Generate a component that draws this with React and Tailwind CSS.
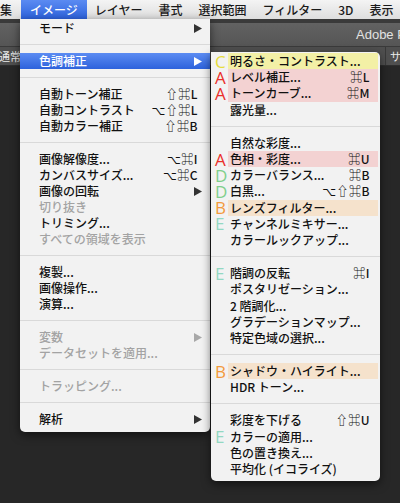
import React from 'react';

const font = { fontFamily: '"Noto Sans CJK JP", "DejaVu Sans", sans-serif' };

const Arrow = ({ color = '#333333' }) => (
  <svg width="8" height="9" viewBox="0 0 8 9" className="shrink-0">
    <path d="M0 0 L8 4.5 L0 9 Z" fill={color} />
  </svg>
);

const Sep = () => (
  <div className="h-[17px] flex items-center">
    <div className="w-full h-px bg-[#d9d9d9]" />
  </div>
);

// left menu row
const Item = ({ label, shortcut, arrow, disabled, active }) => (
  <div
    className={`h-4 flex items-center justify-between pl-[19px] ${arrow ? 'pr-[8px]' : 'pr-[12px]'} text-[12px] leading-none font-medium ${
      active
        ? 'bg-gradient-to-b from-[#5b8bf2] to-[#2d62dc] text-white'
        : disabled
        ? 'text-[#a3a3a3]'
        : 'text-[#111]'
    }`}
  >
    <span>{label}</span>
    {shortcut && <span className="tracking-[0.5px]">{shortcut}</span>}
    {arrow && <Arrow color={active ? '#ffffff' : disabled ? '#a8a8a8' : '#333333'} />}
  </div>
);

const tagColor = {
  C: 'text-[#e6dc3c]',
  A: 'text-[#ea2f2a]',
  D: 'text-[#7fcf8c]',
  B: 'text-[#f39a3c]',
  E: 'text-[#93d8c2]',
};

const hlColor = {
  yellow: 'bg-[#f3f0a6]',
  pink: 'bg-[#f3d2d2]',
  peach: 'bg-[#f5e2cc]',
};

// submenu row
const SubItem = ({ tag, label, shortcut, hl }) => (
  <div className="h-[16.2px] flex items-stretch">
    <div
      className={`w-[17px] pl-[4px] flex items-center text-[17px] leading-none overflow-visible ${tag ? tagColor[tag] : ''}`}
      style={{ fontFamily: '"Open Sans", "Liberation Sans", sans-serif' }}
    >
      {tag}
    </div>
    <div
      className={`flex-1 mr-[2px] pl-[2px] pr-[8px] flex items-center justify-between text-[12px] leading-none font-medium text-[#111] ${hl ? hlColor[hl] : ''}`}
    >
      <span>{label}</span>
      {shortcut && <span className="tracking-[0.5px]">{shortcut}</span>}
    </div>
  </div>
);

const SubSep = () => (
  <div className="h-[17px] flex items-center">
    <div className="w-full h-px bg-[#d9d9d9]" />
  </div>
);

const menuBarItems = ['レイヤー', '書式', '選択範囲', 'フィルター', '3D', '表示'];

export default function App() {
  return (
    <div className="relative w-[400px] h-[503px] overflow-hidden bg-[#272727]" style={font}>
      {/* menu bar */}
      <div className="h-[19px] flex items-center overflow-hidden bg-gradient-to-b from-[#f4f4f4] to-[#dedede] text-[12px] font-medium text-[#1a1a1a] whitespace-nowrap">
        <div className="pr-[9px] h-full flex items-center">集</div>
        <div className="h-full flex items-center px-[9px] bg-gradient-to-b from-[#5b8bf2] to-[#2d62dc] text-white">イメージ</div>
        {menuBarItems.map((m) => (
          <div key={m} className="h-full flex items-center px-[8px]">{m}</div>
        ))}
      </div>

      {/* app chrome behind */}
      <div className="h-[4px] bg-[#3a3a3a]" />
      <div className="h-[24px] overflow-hidden bg-gradient-to-b from-[#626262] to-[#555555] flex items-center pl-[356px] border-b border-[#3a3a3a]">
        <span className="text-[13px] text-[#e2e2e2] whitespace-nowrap" style={{ fontFamily: '"Liberation Sans", sans-serif' }}>
          Adobe Photoshop
        </span>
      </div>
      <div className="h-[19px] bg-[#4f4f4f] flex items-center justify-between text-[11px] text-[#eaeaea] border-b border-[#2e2e2e]">
        <span className="-ml-[1px]">通常</span>
        <div className="flex items-center h-full">
          <div className="w-px h-full bg-[#3a3a3a] mr-[4px]" />
          <span className="w-[10px] overflow-hidden">サ</span>
        </div>
      </div>

      {/* image menu */}
      <div className="absolute left-[20px] top-[19px] w-[190px] pt-[1px] pb-[5px] bg-[#f2f2f2] rounded-b-[5px] shadow-[0_3px_10px_rgba(0,0,0,0.55)]">
        <Item label="モード" arrow />
        <Sep />
        <Item label="色調補正" arrow active />
        <Sep />
        <Item label="自動トーン補正" shortcut="⇧⌘L" />
        <Item label="自動コントラスト" shortcut="⌥⇧⌘L" />
        <Item label="自動カラー補正" shortcut="⇧⌘B" />
        <Sep />
        <Item label="画像解像度..." shortcut="⌥⌘I" />
        <Item label="カンバスサイズ..." shortcut="⌥⌘C" />
        <Item label="画像の回転" arrow />
        <Item label="切り抜き" disabled />
        <Item label="トリミング..." />
        <Item label="すべての領域を表示" disabled />
        <Sep />
        <Item label="複製..." />
        <Item label="画像操作..." />
        <Item label="演算..." />
        <Sep />
        <Item label="変数" arrow disabled />
        <Item label="データセットを適用..." disabled />
        <Sep />
        <Item label="トラッピング..." disabled />
        <Sep />
        <Item label="解析" arrow />
      </div>

      {/* adjustments submenu */}
      <div className="absolute left-[211px] top-[52px] w-[169px] pt-[1px] pb-[4px] bg-[#f2f2f2] rounded-tr-[5px] rounded-b-[5px] shadow-[0_3px_10px_rgba(0,0,0,0.55)]">
        <SubItem tag="C" label="明るさ・コントラスト..." hl="yellow" />
        <SubItem tag="A" label="レベル補正..." shortcut="⌘L" hl="pink" />
        <SubItem tag="A" label="トーンカーブ..." shortcut="⌘M" hl="pink" />
        <SubItem label="露光量..." />
        <SubSep />
        <SubItem label="自然な彩度..." />
        <SubItem tag="A" label="色相・彩度..." shortcut="⌘U" hl="pink" />
        <SubItem tag="D" label="カラーバランス..." shortcut="⌘B" />
        <SubItem tag="D" label="白黒..." shortcut="⌥⇧⌘B" />
        <SubItem tag="B" label="レンズフィルター..." hl="peach" />
        <SubItem tag="E" label="チャンネルミキサー..." />
        <SubItem label="カラールックアップ..." />
        <SubSep />
        <SubItem tag="E" label="階調の反転" shortcut="⌘I" />
        <SubItem label="ポスタリゼーション..." />
        <SubItem label="2 階調化..." />
        <SubItem label="グラデーションマップ..." />
        <SubItem label="特定色域の選択..." />
        <SubSep />
        <SubItem tag="B" label="シャドウ・ハイライト..." hl="peach" />
        <SubItem label="HDR トーン..." />
        <SubSep />
        <SubItem label="彩度を下げる" shortcut="⇧⌘U" />
        <SubItem tag="E" label="カラーの適用..." />
        <SubItem label="色の置き換え..." />
        <SubItem label="平均化 (イコライズ)" />
      </div>
    </div>
  );
}
